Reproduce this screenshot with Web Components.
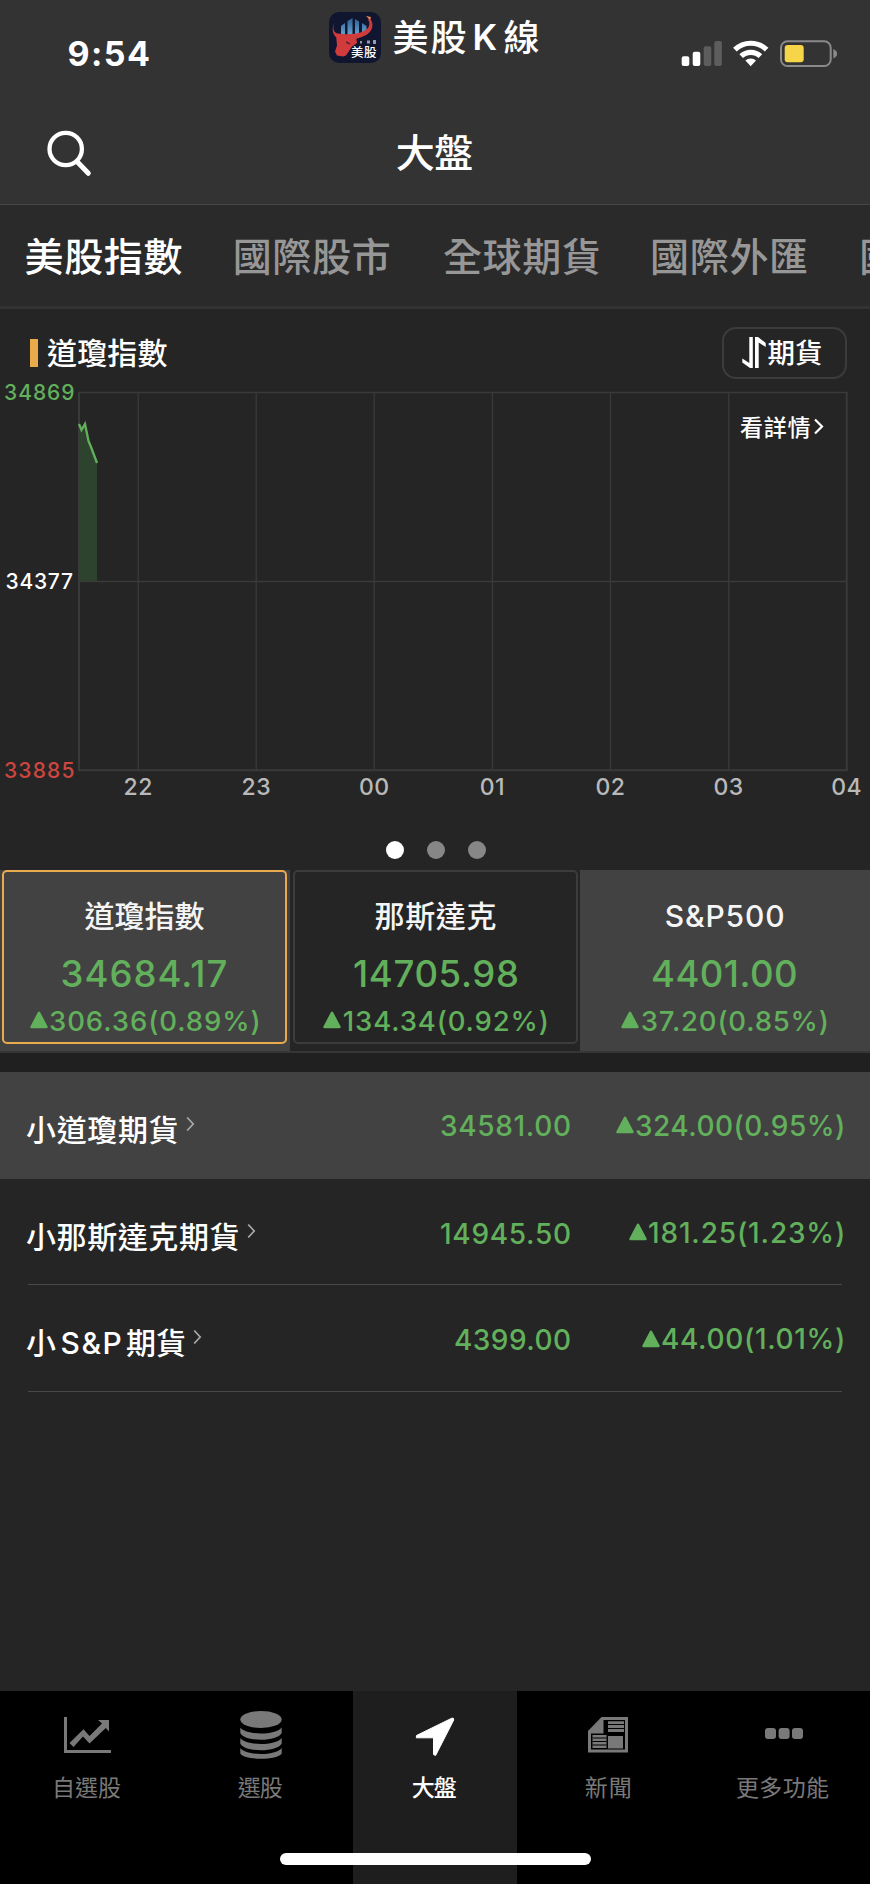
<!DOCTYPE html>
<html lang="zh-Hant">
<head>
<meta charset="utf-8">
<title>大盤</title>
<style>
html,body{margin:0;padding:0;background:#252525}
body{width:870px;height:1884px;overflow:hidden;color:#fff;font-family:Inter,"Noto Sans CJK TC",sans-serif}
</style>
</head>
<body>
<market-app></market-app>
<script>
const FONT = 'Inter,"Noto Sans CJK TC",sans-serif';
const pen = document.createElement('canvas').getContext('2d');
function define(name, html, after) {
  const tpl = document.createElement('template');
  tpl.innerHTML = html;
  customElements.define(name, class extends HTMLElement {
    connectedCallback() {
      if (this.shadowRoot) return;
      this.attachShadow({mode: 'open'}).append(tpl.content.cloneNode(true));
      if (after) after.call(this, this.shadowRoot);
    }
  });
}

/* Text trimmed to its visible bounds and tracked out to the width in "w". */
define('trim-text', `<style>
:host{display:flow-root;flex:none;white-space:nowrap}
div{width:max-content}
</style><div><slot></slot></div>`, function (root) {
  const text = this.textContent, size = +this.getAttribute('size'), weight = this.getAttribute('weight') || 500;
  const w = +this.getAttribute('w');
  pen.font = `${weight} ${size}px ${FONT}`;
  const m = pen.measureText(text);
  const ink = m.actualBoundingBoxLeft + m.actualBoundingBoxRight;
  const n = [...text].length;
  const track = w ? (w - ink) / (n - 1) : 0;
  const h = m.actualBoundingBoxAscent + m.actualBoundingBoxDescent;
  this.style.cssText += `width:${w || ink}px;height:${h}px`;
  const box = root.querySelector('div');
  box.style.cssText = `font:${weight} ${size}px/${size}px ${FONT};letter-spacing:${track}px;margin-left:${m.actualBoundingBoxLeft}px`;
  const mark = document.createElement('i');
  mark.style.cssText = 'display:inline-block;width:0;height:0';
  box.append(mark);
  const base = mark.getBoundingClientRect().bottom - box.getBoundingClientRect().top;
  mark.remove();
  box.style.marginTop = (m.actualBoundingBoxAscent - base) + 'px';
});

define('app-icon', `<style>:host{display:block;width:52px;height:51px}svg{display:block}</style>
<svg width="52" height="51" viewBox="0 0 52 51">
<defs><linearGradient id="b" x1="0" y1="0" x2="0" y2="1"><stop offset="0" stop-color="#2c5f93"/><stop offset="1" stop-color="#69a9d3"/></linearGradient></defs>
<rect width="52" height="51" rx="10" fill="#10162f"/>
<path fill="url(#b)" d="M12 14l4-3v12h-4zM18.500 9l5-3v18h-5zM26 7l4 2.500v13h-4zM33 11l4.500 3v7H33z"/>
<path fill="#d23b3b" d="M5.500 10.500C3 17 5 21 9 21.500c8 1.500 19 1 26-2.500 6-3 6.500-8 4-11.500l2-1c4 5 3 12-3 16-4 2.500-8 3.500-12 4.500l-18-1c-4-3-6-9-2.500-15.500z"/>
<path fill="#d23b3b" d="M7 22l20 2 1 7-5 3.500-6 9-3 1-6-1-2-4 2-6z"/>
<path fill="#e88b54" d="M37 4l4 4 1-3z"/><path d="M17 30l4 2" stroke="#611f32" stroke-width="1.500"/>
<g fill="#929bad"><rect x="31" y="29" width="2" height="2.500"/><rect x="38" y="28.500" width="3" height="3"/><rect x="44" y="28" width="3" height="4"/></g>
<text x="22" y="44.500" font-size="12.500" font-weight="500" fill="#fff" textLength="25.500" font-family="Noto Sans CJK TC,sans-serif">美股</text>
</svg>`);

define('status-bar', `<style>
:host{display:flex;height:100px;align-items:flex-start}
.time{margin:40px 0 0 68.500px}
app-icon{margin:12px 0 0 180px}
.k{display:flex;align-items:center;height:34px;margin:20px 0 0 12.500px}
.k :nth-child(2){margin:0 8px 0 9px}
svg{display:block}.s{margin:38px 0 0 141.500px}
</style>
<trim-text class="time" size="34" weight="700" w="80.500">9:54</trim-text>
<app-icon></app-icon>
<div class="k"><trim-text size="36" w="72">美股</trim-text><trim-text size="35" weight="600">K</trim-text><trim-text size="36">線</trim-text></div>
<svg class="s" width="160" height="32" viewBox="680 38 160 32">
<rect x="681.700" y="56.300" width="7.600" height="9.700" rx="2" fill="#fff"/><rect x="692.700" y="51.700" width="7.600" height="14.300" rx="2" fill="#fff"/>
<rect x="703.700" y="46.300" width="7.600" height="19.700" rx="2" fill="#5d5d5d"/><rect x="714.300" y="41" width="7.600" height="25" rx="2" fill="#5d5d5d"/>
<g fill="none" stroke="#fff" stroke-width="5.200"><path d="M734.900 49.700a22.700 22.700 0 0 1 31.700 0"/><path d="M741.200 56.200a13.900 13.900 0 0 1 19.200 0"/></g>
<path fill="#fff" d="M745.400 60.600a7.600 7.600 0 0 1 10.600 0l-5.300 5.600z"/>
<rect x="781" y="41.200" width="49.700" height="24.800" rx="6.500" fill="none" stroke="#8a8a8a" stroke-width="2"/>
<rect x="784.700" y="45" width="19" height="17.200" rx="3" fill="#f6d648"/>
<path fill="#8a8a8a" d="M833.300 49c5 2 5 7.500 0 9.500z"/>
</svg>`);

define('nav-header', `<style>
:host{display:flex;height:104px;position:relative;justify-content:center;align-items:center;box-sizing:border-box;padding-right:1px}
svg{position:absolute;left:44px;top:27px}
</style>
<svg width="52" height="52" fill="none" stroke="#fff"><circle cx="21.700" cy="22" r="16.200" stroke-width="4.300"/><path d="M33 34.500L44.300 46.300" stroke-width="5" stroke-linecap="round"/></svg>
<trim-text size="39" w="75.500">大盤</trim-text>`);

define('category-tabs', `<style>
:host{display:flex;height:101px;align-items:center;gap:54.200px;padding-left:25.500px;background:#2a2a2a;border-top:1px solid #464646;border-bottom:3px solid #333;overflow:hidden;color:#979797}
trim-text{margin-top:2px}
.on{color:#fff}
</style>
<trim-text class="on" size="39" w="156">美股指數</trim-text><trim-text size="39" w="154">國際股市</trim-text>
<trim-text size="39" w="155">全球期貨</trim-text><trim-text size="39" w="154">國際外匯</trim-text><trim-text size="39" w="154" style="margin-left:1px">國際債券</trim-text>`);

define('chart-head', `<style>
:host{display:flex;height:76px;align-items:center;padding:11px 23px 0 30px;box-sizing:border-box}
i{width:7.500px;height:28px;background:#e9ab4a;margin-right:9.500px}
.b{margin-left:auto;width:125.500px;height:52px;box-sizing:border-box;border:2px solid #3c3c3c;border-radius:14px;display:flex;align-items:center;padding-left:18.500px}
svg{margin-right:1.500px}
</style><i></i><trim-text size="30" w="120.500">道瓊指數</trim-text>
<div class="b"><svg width="24" height="31" fill="#fff"><path d="M7.300 0h3.500v31H8L.300 25.500v-4L7.300 26zM13 0h3l7.700 6v4L16.700 5.500V31H13z"/></svg><trim-text size="27.500" w="53.500">期貨</trim-text></div>`);

define('price-chart', `<style>:host{display:block;height:422px}svg{display:block}</style>
<svg width="870" height="422" viewBox="0 385 870 422" font-family='Inter,"Noto Sans CJK TC",sans-serif' font-weight="500" overflow="visible">
<path d="M79 426L81 430 84.700 424 88 439 92 448 97 463V581H79z" fill="#2d432d"/>
<g stroke="#3a3a3a" stroke-width="1.300" fill="none"><path d="M79 392.500H846.500M79 581.500H846.500"/><path d="M138.200 392V770M256.200 392V770M374.200 392V770M492.500 392V770M610.500 392V770M728.700 392V770"/><path d="M79 392V770.300H846.700V392" stroke-width="2"/></g>
<path d="M79 424L81.500 430 85 424 88.500 441 91 447 97 463" fill="none" stroke="#62b05c" stroke-width="2.300"/>
<g font-size="21"><text x="4" y="400.300" textLength="70.500" fill="#62b05c">34869</text><text x="5.500" y="588.800" textLength="67.500" fill="#fff">34377</text><text x="4" y="778.300" textLength="70.500" fill="#ce453f">33885</text></g>
<g id="x" font-size="23" fill="#b9b9b9" text-anchor="middle"></g>
<text x="740" y="436" font-size="23" textLength="70.500" fill="#fff">看詳情</text>
<path d="M815 419.500l7 7-7 7" fill="none" stroke="#fff" stroke-width="2.200"/>
</svg>`, function (root) {
  ['22', '23', '00', '01', '02', '03', '04'].forEach((t, i) => {
    const e = document.createElementNS('http://www.w3.org/2000/svg', 'text');
    e.setAttribute('x', 138.2 + i * 118.07); e.setAttribute('y', 795); e.setAttribute('letter-spacing', '.5');
    e.textContent = t; root.getElementById('x').append(e);
  });
});

define('page-dots', `<style>:host{display:flex;height:63px;justify-content:center;padding-top:34px;box-sizing:border-box;gap:23px;padding-left:2px}
i{width:18px;height:18px;border-radius:50%;background:#878787}i:first-of-type{background:#fff}</style><i></i><i></i><i></i>`);

define('index-card', `<style>
:host{display:block;height:181px;background:#424242;box-sizing:border-box;padding:0 3px 0 2px}
:host([dark]){background:#252525;padding:0 2px 0 3px}
div{height:174px;box-sizing:border-box;border:2px solid transparent;border-radius:5px;display:grid;grid-template-rows:88px 26px 56px;justify-items:center;align-items:center}
:host([active]) div{border-color:#e9ab4d}
:host([dark]) div{border-color:#3c3c3c}
</style><div><slot name="n"></slot><slot name="p"></slot><slot name="c"></slot></div>`);

define('up-change', `<style>:host{display:flex;align-items:center;color:#62b05c;gap:2.500px;height:24px}svg{flex:none;margin-top:-1px}</style>
<svg width="18" height="18" fill="currentColor"><path d="M9 1.800L16.500 16H1.500z" stroke="currentColor" stroke-width="2.500" stroke-linejoin="round"/></svg><slot></slot>`);

define('index-cards', `<style>:host{display:grid;grid-template-columns:repeat(3,290px);border-bottom:2px solid #363636;color:#f5f5f5}
[slot=p]{color:#62b05c}[slot=c]{margin:12px 1px 0 0}</style>
<index-card active><trim-text slot="n" size="30" w="120">道瓊指數</trim-text><trim-text slot="p" weight="550" size="36.500" w="164">34684.17</trim-text><up-change slot="c"><trim-text size="27.500" w="208.500">306.36(0.89%)</trim-text></up-change></index-card>
<index-card dark><trim-text slot="n" size="30" w="120">那斯達克</trim-text><trim-text slot="p" weight="550" size="36.500" w="163">14705.98</trim-text><up-change slot="c"><trim-text size="27.500" w="203">134.34(0.92%)</trim-text></up-change></index-card>
<index-card><trim-text slot="n" size="30" w="117.500">S&amp;P500</trim-text><trim-text slot="p" weight="550" size="36.500" w="143">4401.00</trim-text><up-change slot="c"><trim-text size="27.500" w="185">37.20(0.85%)</trim-text></up-change></index-card>`);

define('future-row', `<style>
:host{display:grid;grid-template-columns:1fr auto 273px;height:106.700px;box-sizing:border-box;padding:0 27px 0 26px;align-items:center;color:#fff;background:linear-gradient(#484848,#484848) 28px bottom/814px 1px no-repeat}
:host([active]){background:#424242}
.n{display:flex;align-items:center;gap:5.500px;height:28px;margin-top:9px}
svg{margin:-12px 0 0 2.500px}
.p,.c{color:#62b05c;display:flex;justify-content:flex-end;align-items:center;height:24px;margin-top:1px}
</style><div class="n"><slot name="n"></slot><svg width="9" height="16" fill="none" stroke="#aaa" stroke-width="1.700"><path d="M1.200 1.500L7.200 8l-6 6.500"/></svg></div>
<div class="p"><slot name="p"></slot></div><div class="c"><slot name="c"></slot></div>`);

define('future-list', `<style>:host{display:block;padding-top:19px;background:linear-gradient(#202020,#202020) 0 0/100% 19px no-repeat}</style>
<future-row active><trim-text slot="n" size="30" w="151.500">小道瓊期貨</trim-text><trim-text slot="p" size="28" w="129">34581.00</trim-text><up-change slot="c"><trim-text size="28" w="207">324.00(0.95%)</trim-text></up-change></future-row>
<future-row><trim-text slot="n" size="30" w="212.500">小那斯達克期貨</trim-text><trim-text slot="p" size="28" w="129">14945.50</trim-text><up-change slot="c"><trim-text size="28" w="194">181.25(1.23%)</trim-text></up-change></future-row>
<future-row><trim-text slot="n" size="30">小</trim-text><trim-text slot="n" size="30" w="59">S&amp;P</trim-text><trim-text slot="n" size="30" w="59">期貨</trim-text><trim-text slot="p" size="28" w="115">4399.00</trim-text><up-change slot="c"><trim-text size="28" w="181">44.00(1.01%)</trim-text></up-change></future-row>`);

define('tab-item', `<style>
:host{display:flex;flex-direction:column;align-items:center;width:164px;height:193px;box-sizing:border-box;padding-top:18px;color:#797979}
:host([active]){background:#1e1e1e;color:#fff}
.i{height:58px}.l{height:40px;display:flex;align-items:center}
</style><div class="i"><slot name="i"></slot></div><div class="l"><slot></slot></div>`);

define('tab-bar', `<style>
:host{display:grid;grid-template-columns:repeat(5,174px);justify-items:center;background:#000;height:193px;position:relative;margin-top:auto}
.home{position:absolute;left:280px;top:162px;width:311px;height:12px;border-radius:6px;background:#fff}
svg{display:block}.a{margin-right:1.500px}
</style>
<tab-item><svg slot="i" width="52" height="52" fill="currentColor"><path d="M3 8h3v33h44v3H3z"/><path d="M8.500 34L22.500 20.200 28.500 27 41 14.500 37 11H48V22.500L44.800 19 28.500 34.500 22 27.500 12.500 38z"/></svg><trim-text size="23" weight="400" w="66" style="margin-left:2px">自選股</trim-text></tab-item>
<tab-item><svg slot="i" width="52" height="52" fill="currentColor"><ellipse cx="26" cy="10.500" rx="20.700" ry="8.500"/><path d="M5.300 18.500c6 8 35 8 41.400 0V24c-4 9-37.400 9-41.400 0zM5.300 29c6 8 35 8 41.400 0v5.500c-4 9-37.400 9-41.400 0zM5.300 39c6 8 35 8 41.400 0v5.500c-4 7-37.400 7-41.400 0z"/></svg><trim-text class="a" size="23" weight="400" w="45">選股</trim-text></tab-item>
<tab-item active><svg class="a" slot="i" width="52" height="52" fill="currentColor"><path d="M43.800 9.200L8.500 26.500 8.300 28.800H25.500V45.500L27.600 46.500 45.700 11Q46 8.500 43.800 9.200z" stroke="currentColor" stroke-width="1" stroke-linejoin="round"/></svg><trim-text class="a" size="23" w="45">大盤</trim-text></tab-item>
<tab-item><svg slot="i" width="52" height="52"><path fill="currentColor" d="M18.500 8H45V43.500H5V22z"/><path fill="#000" d="M20.500 11h21.500v29.500h-34V24.500H20.500z"/><path fill="currentColor" d="M25 12.300h16V23H25zM25 27h15v12.500H25zM9.500 26h14V39H9.500zM8 23L20 10.500V23z"/><path d="M25 15.500h16M25 19.500h16M25 23.500h16M9.500 29h14M9.500 32.500h14M9.500 36h14" stroke="#000" stroke-width="1"/></svg><trim-text class="a" size="23" weight="400" w="45">新聞</trim-text></tab-item>
<tab-item><svg slot="i" width="52" height="52" fill="currentColor"><rect x="8" y="19" width="11" height="11" rx="3"/><rect x="21.600" y="19" width="11" height="11" rx="3"/><rect x="35" y="19" width="11" height="11" rx="3"/></svg><trim-text size="23" weight="400" w="92">更多功能</trim-text></tab-item>
<div class="home"></div>`);

define('market-app', `<style>:host{display:flex;flex-direction:column;width:870px;height:1884px;background:#252525}.top{background:#333}</style>
<div class="top"><status-bar></status-bar><nav-header></nav-header></div>
<category-tabs></category-tabs><chart-head></chart-head><price-chart></price-chart><page-dots></page-dots>
<index-cards></index-cards><future-list></future-list><tab-bar></tab-bar>`);
</script>
</body>
</html>
